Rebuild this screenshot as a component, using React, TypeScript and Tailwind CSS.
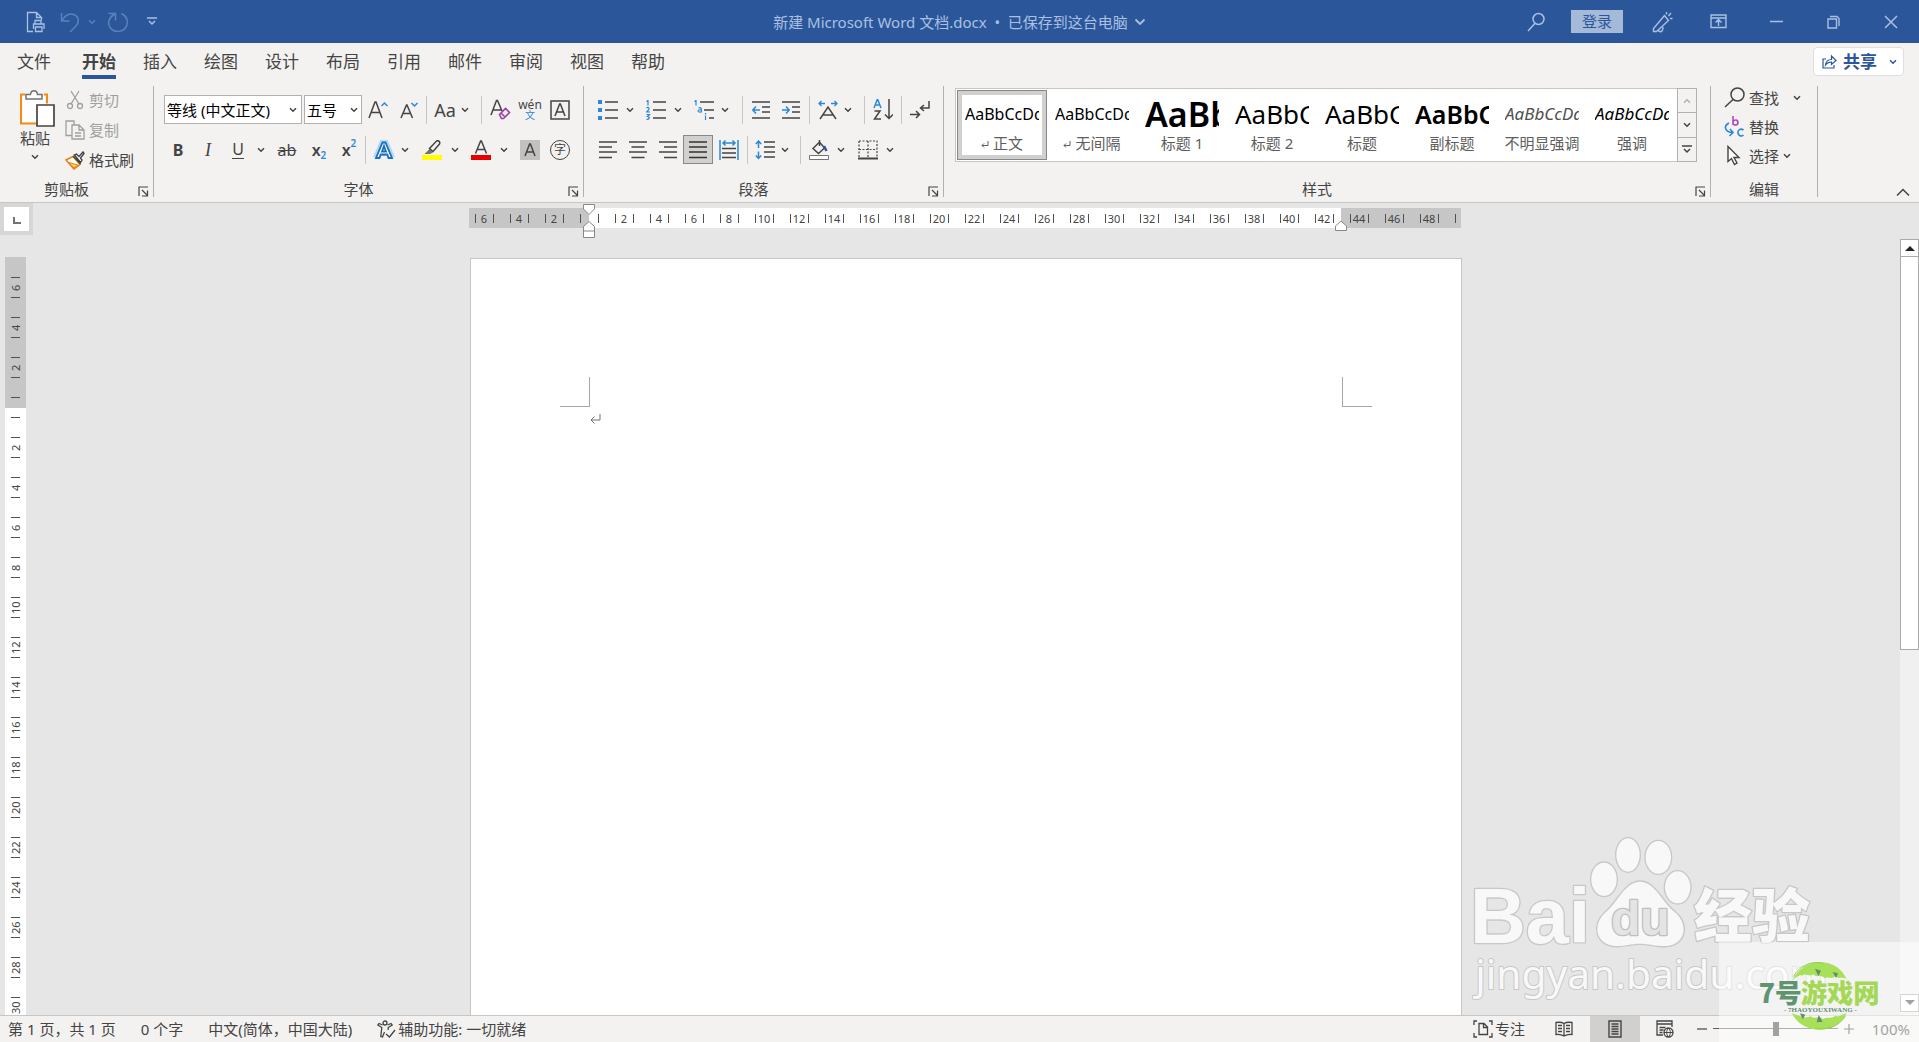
import React from 'react'

type Kids = { children?: React.ReactNode; className?: string }

const Svg = ({ w, h, children, className = '' }: { w: number; h: number } & Kids) => (
  <svg width={w} height={h} viewBox={`0 0 ${w} ${h}`} fill="none" stroke="currentColor" strokeWidth="1.5" className={`shrink-0 ${className}`} aria-hidden="true">
    {children}
  </svg>
)

const Chevron = ({ className = '' }: { className?: string }) => (
  <Svg w={8} h={6} className={className}>
    <path d="M1 1.2l3 3 3-3" />
  </Svg>
)

const Tool = ({ label, children, className = '' }: { label: string } & Kids) => (
  <button type="button" aria-label={label} title={label} className={`flex h-[29px] w-[30px] shrink-0 items-center justify-center ${className}`}>
    {children}
  </button>
)

const Drop = ({ label, className = '' }: { label: string; className?: string }) => (
  <button type="button" aria-label={label} className={`flex h-[29px] w-3 shrink-0 items-center justify-center ${className}`}>
    <Chevron />
  </button>
)

const Sep = ({ className = '' }: { className?: string }) => <div className={`mx-[3px] h-7 w-px shrink-0 bg-[#c8c6c4] ${className}`} />

const Group = ({ title, launcher = true, className = '', body = '', children }: { title: string; launcher?: boolean; body?: string } & Kids) => (
  <section aria-label={title} className={`flex flex-col border-r border-[#b3b0ad] ${className}`}>
    <div className={`flex-1 ${body}`}>{children}</div>
    <div className="flex h-4 items-center">
      <span className="flex-1 text-center">{title}</span>
      {launcher && (
        <button type="button" aria-label={`${title}设置`} className="flex w-5 items-center pl-[5px]">
          <Svg w={11} h={11} className="mt-1">
            <path d="M1 10V1h9M4 4l5 5M9.500 4.500V10H4" strokeWidth="1.2" />
          </Svg>
        </button>
      )}
    </div>
  </section>
)

const tabs = ['文件', '开始', '插入', '绘图', '设计', '布局', '引用', '邮件', '审阅', '视图', '帮助']

const styles = [
  { name: '正文', mark: true, look: 'text-base text-black' },
  { name: '无间隔', mark: true, look: 'text-base text-black' },
  { name: '标题 1', look: 'text-[34px] font-semibold text-black' },
  { name: '标题 2', look: 'text-[26px] text-black' },
  { name: '标题', look: 'text-[26px] text-black' },
  { name: '副标题', look: 'text-[25px] font-semibold text-black' },
  { name: '不明显强调', look: 'text-[17px] italic text-[#505050]' },
  { name: '强调', look: 'text-[17px] italic text-black' },
]

const hMarks = [6, 4, 2, 0, ...Array.from({ length: 25 }, (_, i) => i * 2 + 2)]
const vMarks = [6, 4, 2, 0, ...Array.from({ length: 15 }, (_, i) => i * 2 + 2)]

function TitleBar() {
  return (
    <header className="grid h-[43px] shrink-0 grid-cols-[1fr_auto_1fr] items-center bg-[#2b579a] text-[#a9c0e3]">
      <div className="flex items-center pl-[26px]">
        <button type="button" aria-label="打印预览">
          <Svg w={20} h={22}>
            <path d="M7 20.500H1.500V1.500h9l5 5V9M10.500 1.500v5h5M9 13V9.500h6V13M7.500 18v-5h10.500v5M9.500 16h6.500v4.500H9.500z" strokeWidth="1.3" />
          </Svg>
        </button>
        <button type="button" aria-label="撤消" className="ml-3.5 text-[#5b81bb]">
          <Svg w={20} h={22}>
            <path d="M1.500 2v8h8M1.500 10C5 4.500 9 2 13.500 3.500c6 2 6 8.500 2 12L10 21" />
          </Svg>
        </button>
        <button type="button" aria-label="撤消列表" className="ml-2 text-[#5b81bb]"><Chevron /></button>
        <button type="button" aria-label="重复" className="ml-[11px] text-[#5b81bb]">
          <Svg w={22} h={22}>
            <path d="M1.500 2.500h7v7M8 3C2 6 0 12 3 16.500c4 5.500 12.500 5 16-.5C22 11 20 5 14.500 2.500" />
          </Svg>
        </button>
        <button type="button" aria-label="自定义快速访问工具栏" className="ml-[18px]">
          <Svg w={10} h={9}><path d="M0 1h10M2 4l3 3 3-3" /></Svg>
        </button>
      </div>
      <button type="button" className="flex items-center gap-1.5 text-[15px]">
        <span>新建 Microsoft Word 文档.docx&nbsp; •&nbsp; 已保存到这台电脑</span>
        <Svg w={12} h={8}><path d="M1.500 1.500L6 6l4.500-4.500" strokeWidth="1.8" /></Svg>
      </button>
      <div className="flex items-center justify-end pr-[21px]">
        <button type="button" aria-label="搜索">
          <Svg w={18} h={20}><circle cx="11.500" cy="7" r="5.500" /><path d="M7.800 11.500L1 19" /></Svg>
        </button>
        <button type="button" className="ml-[26px] h-[23px] w-[52px] bg-[#a5b9d8] text-[15px] leading-[23px] text-[#2b579a]">登录</button>
        <button type="button" aria-label="即将推出的功能" className="ml-[29px]">
          <Svg w={21} h={22}>
            <path d="M12.500 4.500L1.500 17.500V20.500h3L16.500 9.500zM6 19c2 3 5 2 5-3M14.500 3.500V1M16.500 5L19 2M18 7.500h2.500" strokeWidth="1.400" />
          </Svg>
        </button>
        <button type="button" aria-label="功能区显示选项" className="ml-[37px]">
          <Svg w={17} h={15}><path d="M1 1h15v12.500H1zM1 4h15M8.500 12V6M5.500 8.500l3-3 3 3" strokeWidth="1.400" /></Svg>
        </button>
        <button type="button" aria-label="最小化" className="ml-[43px]"><Svg w={13} h={13}><path d="M0 6.500h13" /></Svg></button>
        <button type="button" aria-label="还原" className="ml-11">
          <Svg w={13} h={14}><path d="M1 4h8.500v9H1zM3 1.500h7l2 2V11" strokeWidth="1.400" /></Svg>
        </button>
        <button type="button" aria-label="关闭" className="ml-11"><Svg w={14} h={14}><path d="M1 1l12 12M13 1L1 13" /></Svg></button>
      </div>
    </header>
  )
}

function TabRow() {
  return (
    <nav className="flex h-10 items-start justify-between pl-[17px] pr-[15px]">
      <div className="flex gap-[27px] text-[17px]">
        {tabs.map((t, i) => (
          <button key={t} type="button" className={`h-9 border-b-4 pt-[5px] leading-[27px] ${i === 0 ? 'mr-1' : ''} ${i === 1 ? 'border-[#2b579a] font-bold' : 'border-transparent'}`}>
            {t}
          </button>
        ))}
      </div>
      <div className="mt-1 flex h-[29px] items-center rounded-sm border border-[#e1dfdd] bg-white text-[#2b579a]">
        <button type="button" className="flex items-center gap-1.5 pl-2 text-[17px] font-bold leading-none">
          <Svg w={15} h={15}><path d="M4 5H1v9h11v-3M3.500 11C4 7 6.500 5.500 9.500 5.500V2L14 6.500l-4.500 4V8C7 8 5 9 3.500 11z" strokeWidth="1.200" /></Svg>
          共享
        </button>
        <button type="button" aria-label="共享选项" className="ml-3 pr-1.5"><Chevron /></button>
      </div>
    </nav>
  )
}

function Clipboard() {
  return (
    <Group title="剪贴板" className="w-[154px] shrink-0">
      <div className="flex pt-[3px]">
        <button type="button" className="flex w-[60px] flex-col items-center pl-2.5">
          <Svg w={36} h={38} className="ml-1">
            <path d="M6 5.500H2v29h17M25 5.500h3v9" stroke="#f28c18" strokeWidth="2" />
            <path d="M3.500 7h23v8h-9v18h-14z" fill="#fff" stroke="none" />
            <path d="M7 10V5.500h4.500C12 .5 18 .5 18.500 5.500H23V10z" fill="#fff" stroke="#737373" />
            <path d="M18 16h17v21H18z" fill="#fff" stroke="#444" strokeWidth="1.700" />
          </Svg>
          <span className="mt-[3px] leading-4">粘贴</span>
          <Chevron className="mt-2" />
        </button>
        <div className="flex flex-col pl-[5px] *:h-[30px]">
          <button type="button" disabled className="-mt-1 flex items-center text-[#a19f9d]">
            <Svg w={20} h={20} className="mr-1"><path d="M6 1l8 13M14 1L6 14" strokeWidth="1.300" /><circle cx="5" cy="16" r="2.500" strokeWidth="1.300" /><circle cx="15" cy="16" r="2.500" strokeWidth="1.300" /></Svg>
            剪切
          </button>
          <button type="button" disabled className="flex items-center text-[#a19f9d]">
            <Svg w={20} h={20} className="mr-1"><path d="M7 15.500H1V1h8v4M7 5h7l5 5v9H7zM14 5v5h5M10 13h6M10 16h6" strokeWidth="1.300" /></Svg>
            复制
          </button>
          <button type="button" className="flex items-center">
            <Svg w={20} h={19} className="mr-1">
              <path d="M8 5.500L1 9l8 9 6-4.500z" fill="#fff" stroke="#e8821a" strokeWidth="1.600" />
              <path d="M4 11.500l5 5.500 4-3z" fill="#ffd25e" stroke="#e8821a" strokeWidth="1" />
              <path d="M8 5l7.500 8M9.500 4l2-1 2.500 2.500L18 1l1 1.500-3.500 4.500 1.500 2-1.500 2.500z" fill="#fff" stroke="#444" strokeWidth="1.400" />
            </Svg>
            格式刷
          </button>
        </div>
      </div>
    </Group>
  )
}

function FontGroup() {
  return (
    <Group title="字体" className="w-[430px] shrink-0" body="pl-2.5">
      <div className="flex items-center pt-[9px]">
        <div className="flex h-[29px] w-[138px] items-center border border-[#b3b0ad] bg-white pr-1">
          <select aria-label="字体" className="w-full flex-1 appearance-none bg-transparent pl-0.5 text-[15px] text-black outline-none"><option>等线 (中文正文)</option></select>
          <Chevron />
        </div>
        <div className="ml-0.5 flex h-[29px] w-[58px] items-center border border-[#b3b0ad] bg-white pr-[3px]">
          <select aria-label="字号" className="w-full flex-1 appearance-none bg-transparent pl-0.5 text-[15px] text-black outline-none"><option>五号</option></select>
          <Chevron />
        </div>
        <Tool label="增大字号" className="ml-px">
          <Svg w={20} h={18}><path d="M1 17L7 1h1l6 16M3 11.500h9" /><path d="M13.500 5l3-3 3 3" stroke="#2b88d8" /></Svg>
        </Tool>
        <Tool label="减小字号" className="ml-px">
          <Svg w={20} h={18}><path d="M2 17L7.500 4h.5l5.500 13M4 12.500h7.500" /><path d="M12.500 2l3 3 3-3" stroke="#2b88d8" /></Svg>
        </Tool>
        <Sep className="ml-0.5" />
        <Tool label="更改大小写" className="w-[28px] text-[18px]">Aa</Tool>
        <Drop label="大小写选项" className="-ml-px" />
        <Sep className="ml-2.5" />
        <Tool label="清除所有格式">
          <Svg w={21} h={21}><path d="M1 16L6.500 1.500h1L12 12M3 11h8" /><path d="M9.500 15.500l6-6 4 4-6 6h-2zM11 14l4 4" stroke="#9b3fa8" strokeWidth="1.600" /></Svg>
        </Tool>
        <Tool label="拼音指南" className="flex-col text-[12px] leading-[10px]">
          <span>wén</span><span className="text-[10px] text-[#2b88d8]">文</span>
        </Tool>
        <Tool label="字符边框">
          <Svg w={20} h={20}><path d="M1 1h18v18H1zM5 16l4.600-12h.8L15 16M6.500 12h7" /></Svg>
        </Tool>
      </div>
      <div className="-ml-px flex items-center pt-[11px]">
        <Tool label="加粗" className="text-base font-bold">B</Tool>
        <Tool label="倾斜" className="font-['Liberation_Serif'] text-[18px] italic">I</Tool>
        <Tool label="下划线" className="w-[28px] text-base"><span className="border-b-[1.5px] border-current leading-[18px]">U</span></Tool>
        <Drop label="下划线选项" className="mx-0.5" />
        <Tool label="删除线" className="ml-[3px] text-base"><span className="line-through">ab</span></Tool>
        <Tool label="下标" className="ml-0.5 text-base font-semibold">x<span className="mt-3 text-[10px] text-[#2b88d8]">2</span></Tool>
        <Tool label="上标" className="text-base font-semibold">x<span className="mb-3 text-[10px] text-[#2b88d8]">2</span></Tool>
        <Sep className="ml-px" />
        <Tool label="文本效果">
          <Svg w={22} h={20}>
            <path d="M3 18L9.500 2.500h3L19 18M6 13h10" stroke="#b4d8f4" strokeWidth="6" />
            <path d="M3 18L9.500 2.500h3L19 18h-3.500l-1.200-3.500H7.700L6.500 18zM9 11.500h4L11 6z" fill="#fff" stroke="#1a6fc0" strokeWidth="1.800" />
          </Svg>
        </Tool>
        <Drop label="文本效果选项" />
        <Tool label="突出显示" className="ml-1.5">
          <Svg w={20} h={20}>
            <path d="M2.500 14l5-5 3.500 3.500-3 1.500z" fill="#737373" stroke="none" />
            <path d="M7.500 8.500L14.500 1c2-1 4 1 3 3L11 11.500z" strokeWidth="1.500" />
            <path d="M0 15h20v5H0z" fill="#ff0" stroke="none" />
          </Svg>
        </Tool>
        <Drop label="突出显示颜色" className="ml-0.5" />
        <Tool label="字体颜色" className="ml-[5px]">
          <Svg w={20} h={20}><path d="M4.500 13.500L9.600 1h.8l5.100 12.500M6 9.500h8" /><path d="M0 15h20v5H0z" fill="#e60000" stroke="none" /></Svg>
        </Tool>
        <Drop label="字体颜色选项" className="ml-0.5" />
        <Tool label="字符底纹" className="ml-[5px]">
          <Svg w={20} h={20}><path d="M0 0h20v20H0z" fill="#c3c1bf" stroke="none" /><path d="M5 16l4.600-12h.8L15 16M6.500 12h7" /></Svg>
        </Tool>
        <Tool label="带圈字符"><span className="flex size-5 items-center justify-center rounded-full border-[1.5px] border-current text-[12px] leading-none">字</span></Tool>
      </div>
    </Group>
  )
}

const Lines = ({ d, selected }: { d: string; selected?: boolean }) => (
  <Svg w={18} h={18} className={selected ? 'text-[#333]' : ''}><path d={d} strokeWidth="1.700" /></Svg>
)

function ParagraphGroup() {
  return (
    <Group title="段落" className="w-[360px] shrink-0" body="pl-[9px]">
      <div className="flex items-center pt-[9px]">
        <Tool label="项目符号">
          <Svg w={20} h={20}><path d="M7 2h13M7 10h13M7 18h13" /><path d="M0 0h4v4H0zM0 8h4v4H0zM0 16h4v4H0z" fill="#2b88d8" stroke="none" /></Svg>
        </Tool>
        <Drop label="项目符号库" className="ml-px" />
        <Tool label="编号" className="ml-[5px]">
          <Svg w={20} h={20}><path d="M7 2h13M7 10h13M7 18h13" /><path d="M.5 1.500L2 .5v5M.5 8C2 6.500 4 8 2.500 10L.5 12H4M.5 14.500h3l-2 2c3 0 2 3-1 3" stroke="#2b88d8" strokeWidth="1.200" /></Svg>
        </Tool>
        <Drop label="编号库" className="ml-px" />
        <Tool label="多级列表" className="ml-[5px]">
          <Svg w={20} h={20}><path d="M6 2h14M10 10h10M15 18h5" /><path d="M.5 1.500L2 .5v5M4.500 8c3-1 3 0 3 4.500M7.500 9.500c-5 0-4 4 0 2M11.500 15.500v5M11.500 13v1.500" stroke="#2b88d8" strokeWidth="1.200" /></Svg>
        </Tool>
        <Drop label="多级列表选项" />
        <Sep className="ml-[11px]" />
        <Tool label="减少缩进量">
          <Svg w={18} h={18}><path d="M0 1h18M10 6h8M10 11h8M0 17h18" /><path d="M8 9H1M4 5.500L.8 9 4 12.500" stroke="#2b88d8" /></Svg>
        </Tool>
        <Tool label="增加缩进量">
          <Svg w={18} h={18}><path d="M0 1h18M10 6h8M10 11h8M0 17h18" /><path d="M0 9h7M4 5.500L7.200 9 4 12.500" stroke="#2b88d8" /></Svg>
        </Tool>
        <Sep />
        <Tool label="中文版式">
          <Svg w={20} h={20}><path d="M2 19L10 7l8 12M5 15h10" /><path d="M7 3.500H1M3.500 1L1 3.500 3.500 6M13 3.500h6M16.500 1L19 3.500 16.500 6" stroke="#2b88d8" strokeWidth="1.300" /></Svg>
        </Tool>
        <Drop label="中文版式选项" className="-ml-px" />
        <Sep className="ml-2.5" />
        <Tool label="排序">
          <Svg w={20} h={21}><path d="M1.500 12H7l-5.500 8H8M16 0v19M12 15.500l4 4 4-4" /><path d="M1 9l3.500-9L8 9M2 6h5" stroke="#2b88d8" /></Svg>
        </Tool>
        <Sep />
        <Tool label="显示编辑标记">
          <Svg w={20} h={20}><path d="M19 1v7h-8M14 5l-3.500 3L14 11M0 14.500h9M6 11l3.500 3.500L6 18" /></Svg>
        </Tool>
      </div>
      <div className="flex items-center pt-[11px]">
        <Tool label="左对齐"><Lines d="M0 1h18M0 6h13M0 11h18M0 16.500h13" /></Tool>
        <Tool label="居中"><Lines d="M0 1h18M2.500 6h13M0 11h18M2.500 16.500h13" /></Tool>
        <Tool label="右对齐"><Lines d="M0 1h18M5 6h13M0 11h18M5 16.500h13" /></Tool>
        <Tool label="两端对齐" className="w-[28px] border border-[#8a8886] bg-[#d2d0ce]"><Lines selected d="M0 1h18M0 6h18M0 11h18M0 16.500h18" /></Tool>
        <Tool label="分散对齐" className="ml-px">
          <Svg w={20} h={20}><path d="M3 8.500h14M3 13h14M3 17.500h14" /><path d="M1 0v20M19 0v20M4 3h12M6.500.5L4 3l2.500 2.500M13.500.5L16 3l-2.500 2.500" stroke="#2b88d8" /></Svg>
        </Tool>
        <Sep className="mr-0.5" />
        <Tool label="行和段落间距">
          <Svg w={20} h={20}><path d="M9 2h11M9 7h11M9 12h11M9 17h11" /><path d="M3.500 1.500V8M.8 4l2.700-3 2.700 3M3.500 11.500V18M.8 15.500l2.700 3 2.700-3" stroke="#2b88d8" /></Svg>
        </Tool>
        <Drop label="行距选项" className="-ml-px" />
        <Sep className="ml-[9px]" />
        <Tool label="底纹">
          <Svg w={20} h={20}><path d="M4 8.500L10.500 2l5 6-6 5.500zM10.500 6V0" /><path d="M15 6l2.500 5" stroke="#2b579a" strokeWidth="2.500" /><path d="M.5 15.500h19v4H.5z" fill="#fff" stroke="#737373" strokeWidth="1" /></Svg>
        </Tool>
        <Drop label="底纹颜色" className="ml-px" />
        <Tool label="边框" className="ml-1.5">
          <Svg w={20} h={20}><path d="M1 1h18v17M1 1v17M10 1v17M1 9.500h18" strokeDasharray="2 1.500" strokeWidth="1.200" /><path d="M0 18.500h20" strokeWidth="2" /></Svg>
        </Tool>
        <Drop label="边框选项" className="ml-px" />
      </div>
    </Group>
  )
}

function StylesGroup() {
  return (
    <Group title="样式" className="min-w-0 flex-1" body="pl-[11px]">
      <div className="flex pr-[13px] pt-0.5">
        <div className="flex h-[74px] flex-1 overflow-hidden border border-[#c8c6c4] bg-white p-px">
          {styles.map((s, i) => (
            <button key={s.name} type="button" className={`flex h-[70px] w-[90px] shrink-0 flex-col items-center border ${i === 0 ? 'border-[#8a8886] shadow-[inset_0_0_0_4px_#d2d0ce]' : 'border-transparent'}`}>
              <span className={`mt-[3px] flex h-[39px] w-[74px] items-center overflow-hidden whitespace-nowrap ${s.look}`}>AaBbCcDd</span>
              <span className="flex items-center whitespace-nowrap leading-5 text-[#605e5c]">
                {s.mark && <Svg w={8} h={8} className="mr-1 mt-1"><path d="M7 0v4.500H1M3 2.500l-2 2 2 2" strokeWidth="1" /></Svg>}
                {s.name}
              </span>
            </button>
          ))}
        </div>
        <div className="-ml-px flex w-5 flex-col *:flex *:flex-1 *:items-center *:justify-center *:border *:border-[#b3b0ad]">
          <button type="button" aria-label="上一行" className="text-[#b3b0ad]"><Chevron className="rotate-180" /></button>
          <button type="button" aria-label="下一行" className="-mt-px"><Chevron /></button>
          <button type="button" aria-label="其他样式" className="-mt-px"><Svg w={10} h={9}><path d="M0 1h10M2 4l3 3 3-3" /></Svg></button>
        </div>
      </div>
    </Group>
  )
}

function EditingGroup() {
  return (
    <Group title="编辑" launcher={false} className="w-[107px] shrink-0">
      <div className="-mt-[3px] flex flex-col pl-[13px] *:flex *:h-[29px] *:items-center">
        <button type="button"><Svg w={21} h={21} className="mr-1"><circle cx="13.500" cy="7.500" r="6.500" /><path d="M9 12.500L1 20" /></Svg>查找<Chevron className="ml-3.5" /></button>
        <button type="button">
          <Svg w={21} h={21} className="mr-1">
            <path d="M9 0v9M9 6c1-3 5-2.500 5 .5S10 10 9 7.500" stroke="#b146c2" strokeWidth="1.600" />
            <path d="M19.500 14c-3-2-6 0-5.500 3s3.500 4 5.500 2M5 7C-1 10 1 16 8.500 16.500M6 13l3 3.500L5.500 20" stroke="#2b88d8" strokeWidth="1.600" />
          </Svg>
          替换
        </button>
        <button type="button"><Svg w={21} h={21} className="mr-1"><path d="M4 1.500v15l3.500-3 3 6 2.500-1.500-3-5.500h5z" fill="#fff" strokeWidth="1.400" /></Svg>选择<Chevron className="ml-1" /></button>
      </div>
    </Group>
  )
}

function HorizontalRuler() {
  return (
    <div className="relative h-5 w-[992px] shrink-0 bg-[linear-gradient(to_right,#c6c6c6_120px,#fff_120px,#fff_872px,#c6c6c6_872px)]">
      <div className="-ml-0.5 flex h-5 w-[994px] items-center overflow-hidden">
        {hMarks.map((n, i) => (
          <div key={i} className="flex w-[35px] shrink-0 justify-center">
            <span className="h-[9px] w-[19px] border-x border-[#505050] text-center text-[11px] leading-[9px] text-[#444]">{n === 0 || n === 50 ? '' : n}</span>
          </div>
        ))}
      </div>
      <svg width="12" height="34" viewBox="0 0 12 34" className="absolute -top-1 left-[114px]" fill="#fff" stroke="#8a8886">
        <path d="M.5.500h11V5L6 10.500.500 5zM.500 33.500v-11L6 17.500l5.500 5v11zM.500 27h11" />
      </svg>
      <svg width="12" height="12" viewBox="0 0 12 12" className="absolute left-[866px] top-3" fill="#fff" stroke="#8a8886">
        <path d="M.5 10.500V6L6 1l5.500 5v4.500z" />
      </svg>
    </div>
  )
}

function VerticalRuler() {
  return (
    <div className="ml-[5px] mr-[7px] w-[21px] shrink-0 overflow-hidden bg-[linear-gradient(to_bottom,#c6c6c6_151px,#fff_151px)] pt-2.5">
      {vMarks.map((n, i) => (
        <div key={i} className="flex h-10 items-center justify-center">
          <span className="h-[21px] w-[9px] rotate-180 border-x border-[#505050] text-center text-[11px] leading-[9px] text-[#444] [writing-mode:vertical-rl]">{n || ''}</span>
        </div>
      ))}
    </div>
  )
}

function Workspace() {
  return (
    <main className="flex min-h-0 flex-1">
      <div className="flex min-w-0 flex-1 flex-col">
        <div className="flex h-[54px] shrink-0">
          <button type="button" aria-label="制表符" className="h-8 w-[33px] shrink-0 bg-[#d6d6d6]">
            <span className="ml-1 flex h-6 w-[25px] items-center justify-center bg-white">
              <Svg w={8} h={8} className="mt-1"><path d="M1 0v6h7" stroke="#737373" strokeWidth="2" /></Svg>
            </span>
          </button>
          <div className="flex min-w-0 flex-1 justify-center pr-1 pt-[5px]"><HorizontalRuler /></div>
        </div>
        <div className="flex min-h-0 flex-1">
          <VerticalRuler />
          <div className="flex min-w-0 flex-1 justify-center overflow-hidden pr-0.5">
            <article aria-label="文档页面" className="mt-px flex w-[992px] shrink-0 items-start justify-between border border-b-0 border-[#c6c6c6] bg-white px-[89px] pt-[118px]">
              <div>
                <div className="h-[30px] w-[30px] border-b border-r border-[#a6a6a6]" />
                <Svg w={11} h={10} className="ml-[30px] mt-[7px] text-[#737373]"><path d="M10 0v6H1M4.500 2.500L1 6l3.500 3.500" strokeWidth="1" /></Svg>
              </div>
              <div className="h-[30px] w-[30px] border-b border-l border-[#a6a6a6]" />
            </article>
          </div>
        </div>
      </div>
      <div className="mt-9 flex w-[19px] shrink-0 flex-col bg-[#f0f0f0] pb-[3px]">
        <button type="button" aria-label="向上滚动" className="flex h-[18px] items-center justify-center border border-[#ababab] bg-white"><Svg w={10} h={6}><path d="M0 6l5-5 5 5z" fill="#222" stroke="none" /></Svg></button>
        <div className="-mt-px h-[51%] border border-[#ababab] bg-white" />
        <button type="button" aria-label="向下滚动" className="mt-auto flex h-[18px] items-center justify-center border border-[#ababab] bg-white"><Svg w={10} h={6}><path d="M0 0l5 5 5-5z" fill="#444" stroke="none" /></Svg></button>
      </div>
    </main>
  )
}

function StatusBar() {
  return (
    <footer className="flex h-[27px] shrink-0 items-center justify-between border-t border-[#c6c6c6] bg-[#f3f2f1] pb-px pl-2 pr-[9px]">
      <div className="flex items-center gap-[25px]">
        <button type="button">第 1 页，共 1 页</button>
        <button type="button">0 个字</button>
        <button type="button">中文(简体，中国大陆)</button>
        <button type="button" className="flex items-center gap-0.5">
          <Svg w={19} h={18}><circle cx="8" cy="3" r="2" strokeWidth="1.300" /><path d="M5.500 5L2 3.500.8 5l4 2.500-1 9 1.700.5L7.500 12M10.500 5L14 3.500 15.200 5l-4 2.500V10M9 14l3.500 3L18 10" strokeWidth="1.300" /></Svg>
          辅助功能: 一切就绪
        </button>
      </div>
      <div className="flex items-center">
        <button type="button" className="flex items-center gap-0.5">
          <Svg w={20} h={18}><path d="M4 1H1v4M16 1h3v4M4 17H1v-4M16 17h3v-4M6 3.500h5l3.500 3.500v7.500H6zM10.500 3.500V7.500h4" strokeWidth="1.300" /></Svg>
          专注
        </button>
        <button type="button" aria-label="阅读视图" className="ml-[30px]">
          <Svg w={18} h={16}><path d="M9 2.500C6.500 1 4 1 1 1.500v12c3-.5 5.500 0 8 1.500 2.500-1.500 5-2 8-1.500v-12c-3-.5-5.500-.5-8 1zM9 2.500V15M3 4.500h4M3 7.500h4M3 10.500h4M11 4.500h4M11 7.500h4M11 10.500h4" strokeWidth="1.300" /></Svg>
        </button>
        <button type="button" aria-label="页面视图" className="ml-[17px] flex h-[26px] w-[50px] items-center justify-center bg-[#d2d0ce]">
          <Svg w={14} h={18}><path d="M1 1h12v16H1zM3.500 4h7M3.500 6.500h7M3.500 9h7M3.500 11.500h7M3.500 14h7" strokeWidth="1.400" /></Svg>
        </button>
        <button type="button" aria-label="Web 版式视图" className="ml-4">
          <Svg w={18} h={18}><path d="M7 15H1V1h15v6M1 4h15M3.500 7.500h6M3.500 10h4M3.500 12.500h3" strokeWidth="1.300" /><circle cx="12.500" cy="12.500" r="4.500" fill="#f3f2f1" strokeWidth="1.300" /><path d="M8 12.500h9M12.500 8c-2.500 3-2.500 6 0 9M12.500 8c2.500 3 2.500 6 0 9" strokeWidth="1" /></Svg>
        </button>
        <button type="button" aria-label="缩小" className="ml-[23px]"><Svg w={10} h={10}><path d="M0 5h10" strokeWidth="1.200" /></Svg></button>
        <input
          type="range"
          aria-label="缩放"
          defaultValue={50}
          className="ml-1.5 h-4 w-[125px] appearance-none bg-transparent bg-[linear-gradient(#605e5c,#605e5c)] bg-[length:100%_1px] bg-center bg-no-repeat [&::-webkit-slider-thumb]:h-3.5 [&::-webkit-slider-thumb]:w-1.5 [&::-webkit-slider-thumb]:appearance-none [&::-webkit-slider-thumb]:bg-[#444]"
        />
        <button type="button" aria-label="放大" className="ml-1.5"><Svg w={10} h={10}><path d="M0 5h10M5 0v10" strokeWidth="1.200" /></Svg></button>
        <button type="button" className="ml-4 w-10 text-right">100%</button>
      </div>
    </footer>
  )
}

function Watermarks() {
  return (
    <div className="pointer-events-none absolute bottom-0 right-0 h-[242px] w-[489px]">
      <svg viewBox="0 0 1467 726" className="absolute inset-0 h-full w-full" fill="#f8f8f8" stroke="#c8c8c8" strokeWidth="8" strokeLinejoin="round">
        <g style={{ paintOrder: 'stroke' }}>
          <ellipse cx="522" cy="238" rx="38" ry="50" />
          <ellipse cx="594" cy="165" rx="35" ry="50" />
          <ellipse cx="685" cy="172" rx="38" ry="49" />
          <ellipse cx="743" cy="262" rx="38" ry="48" />
          <path d="M630 245c45 0 65 60 105 92 45 40 28 98-25 101-30 2-50-7-80-7s-50 9-75 7c-55-4-72-60-28-101 38-32 58-92 103-92z" />
          <text x="120" y="430" fontSize="232" fontWeight="700" fontFamily="Liberation Sans, sans-serif">Bai</text>
          <text x="792" y="412" fontSize="174" fontWeight="900" fontFamily="Noto Sans CJK SC, sans-serif">经验</text>
          <text x="136" y="568" fontSize="122" strokeWidth="6" fontFamily="Noto Sans, sans-serif">jingyan.baidu.com</text>
          <text x="543" y="405" fontSize="144" fontWeight="700" fontFamily="Liberation Sans, sans-serif" fill="#e4e4e4" stroke="#c0c0c0">du</text>
        </g>
      </svg>
      <div className="absolute bottom-0 right-0 h-[100px] w-[200px] bg-white/50" />
      <svg viewBox="0 0 1467 726" className="absolute inset-0 h-full w-full" fill="none">
        <path d="M1088 540c15-32 45-53 82-53s65 18 80 50c-18-8-22 2-34-8-12 12-20-2-32 6-14-14-24 0-34-12-12 10-24-6-32 4-12-4-18 6-30 13z" fill="#a8e05a" />
        <path d="M1086 640c14 30 46 49 82 49s66-16 82-50c-14 4-22 14-34 8-14 12-24 2-36 10-16-10-26 2-38-8-16 8-30 0-56-9z" fill="#a8e05a" />
        <path d="M1090 530c20-36 58-48 90-40M1246 648c-20 32-56 44-90 36" stroke="#8fcf4a" strokeWidth="3" />
        <path d="M1155 506l18 6-8 16zM1208 516l16 4-6 14zM1110 640l16 4-8 14zM1166 645l12 20-18 2z" fill="#5f8f6d" />
        <g fontFamily="Noto Sans CJK SC, sans-serif" fontWeight="900">
          <text x="986" y="608" fontSize="80" fill="#5f9470">7号</text>
          <text x="1112" y="608" fontSize="79" fill="#a4d855">游戏网</text>
        </g>
        <text x="1062" y="635" fontSize="21" fontWeight="700" fontFamily="Liberation Serif, serif" fill="#5f8f6d">- 7HAOYOUXIWANG -</text>
      </svg>
    </div>
  )
}

export default function App() {
  return (
    <div className="relative flex h-screen flex-col overflow-hidden bg-[#e6e6e6] font-['Noto_Sans','Noto_Sans_CJK_SC',sans-serif] text-[15px] leading-5 text-[#444]">
      <TitleBar />
      <div className="shrink-0 border-b border-[#c6c6c6] bg-[#f3f2f1]">
        <TabRow />
        <div className="flex h-[119px] pb-[5px] pt-[3px]">
          <Clipboard />
          <FontGroup />
          <ParagraphGroup />
          <StylesGroup />
          <EditingGroup />
          <div className="flex w-[101px] shrink-0 items-end justify-end pr-[9px]">
            <button type="button" aria-label="折叠功能区"><Svg w={14} h={9}><path d="M1 7.500l6-6 6 6" /></Svg></button>
          </div>
        </div>
      </div>
      <Workspace />
      <StatusBar />
      <Watermarks />
    </div>
  )
}
